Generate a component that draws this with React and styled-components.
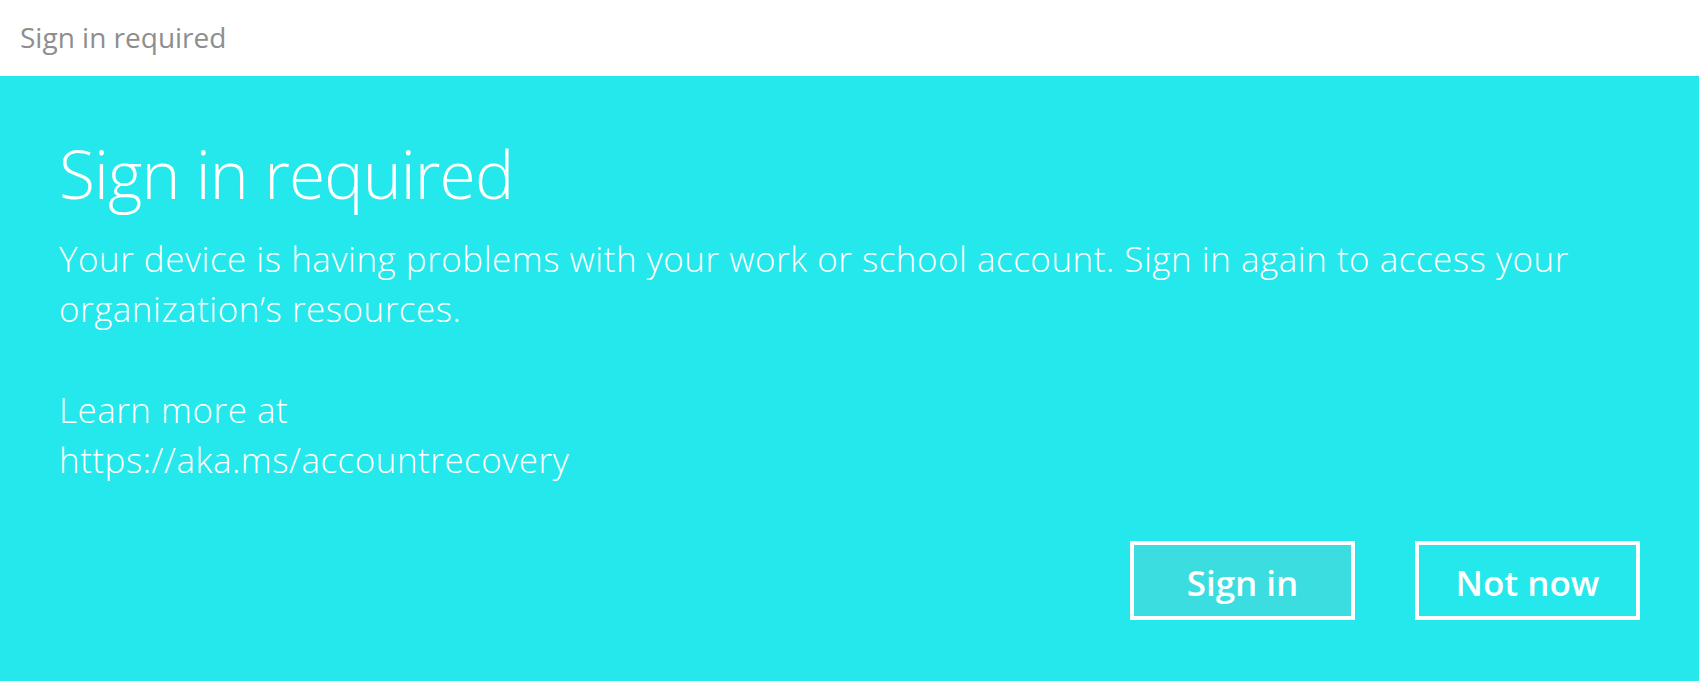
import React from "react";
import styled, { createGlobalStyle } from "styled-components";

const GlobalStyle = createGlobalStyle`
  html, body {
    margin: 0;
    padding: 0;
    background: #24e8eb;
  }
  * {
    box-sizing: border-box;
  }
`;

const Wrapper = styled.div`
  width: 100%;
  height: 681px;
  display: flex;
  flex-direction: column;
  font-family: "Open Sans", "Noto Sans", sans-serif;
  background-color: #24e8eb;
  overflow: hidden;
`;

const TitleBar = styled.div`
  height: 76px;
  flex-shrink: 0;
  background: #fff;
  display: flex;
  align-items: center;
  padding-left: 20px;
  padding-bottom: 3px;
  color: #8e8e8e;
  font-size: 28px;
`;

const Content = styled.div`
  flex: 1;
  display: flex;
  flex-direction: column;
  padding: 52px 59px 0 59px;
  color: #fff;
`;

const Heading = styled.h1`
  margin: 0 0 16px 0;
  font-size: 66px;
  font-weight: 300;
  letter-spacing: -0.9px;
  line-height: 90px;
`;

const Text = styled.p`
  margin: ${(p) => (p.$gap ? "51px" : "0")} 0 0 0;
  font-size: 35px;
  font-weight: 300;
  letter-spacing: 0.5px;
  line-height: 50px;
`;

const Actions = styled.div`
  display: flex;
  justify-content: flex-end;
  gap: 60px;
  margin-top: 56px;
`;

const Button = styled.button`
  width: 225px;
  height: 79px;
  border: 4px solid #fff;
  background: ${(p) => (p.$primary ? "#3cdde0" : "transparent")};
  color: #fff;
  font-family: "Open Sans", "Noto Sans", sans-serif;
  font-size: 35px;
  font-weight: 600;
  padding: 4px 0 0 0;
  cursor: pointer;
`;

export default function App() {
  return (
    <>
      <GlobalStyle />
      <Wrapper>
        <TitleBar>Sign in required</TitleBar>
        <Content>
          <Heading>Sign in required</Heading>
          <Text>
            Your device is having problems with your work or school account. Sign in again to access your
            <br />
            organization’s resources.
          </Text>
          <Text $gap>
            Learn more at
            <br />
            https://aka.ms/accountrecovery
          </Text>
          <Actions>
            <Button $primary>Sign in</Button>
            <Button>Not now</Button>
          </Actions>
        </Content>
      </Wrapper>
    </>
  );
}
